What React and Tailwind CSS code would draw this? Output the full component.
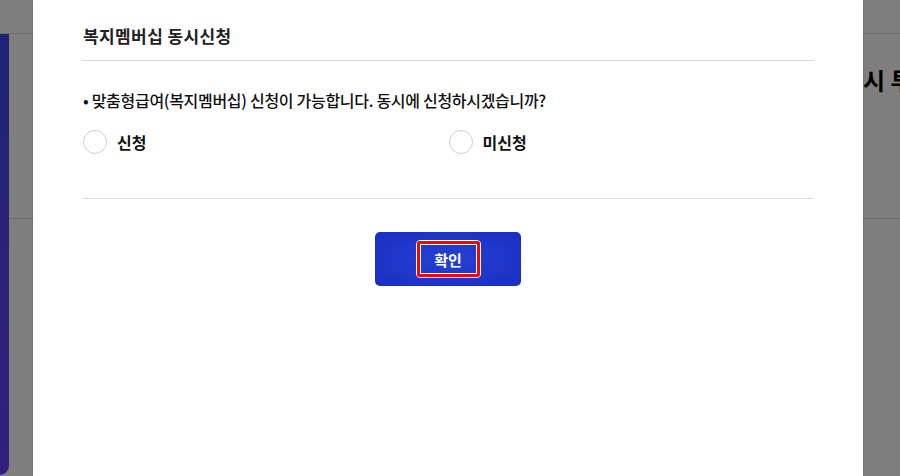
import React, { useState } from "react";

const font = { fontFamily: '"Noto Sans CJK KR", "Noto Sans", sans-serif' };

function Radio({ label, checked, onChange }) {
  return (
    <label className="flex items-center gap-[10px] cursor-pointer">
      <span
        className={`w-[24px] h-[24px] rounded-full border-[1.5px] ${checked ? "border-[#1c31c6]" : "border-[#cfcfcf]"} bg-white flex items-center justify-center`}
        onClick={onChange}
      >
        {checked && <span className="w-[12px] h-[12px] rounded-full bg-[#1c31c6]" />}
      </span>
      <span className="text-[16px] font-bold text-[#111] leading-none" onClick={onChange}>{label}</span>
    </label>
  );
}

export default function App() {
  const [choice, setChoice] = useState(null);

  return (
    <div className="relative w-[900px] h-[476px] overflow-hidden bg-white" style={font}>
      {/* page behind the dialog */}
      <div className="flex flex-col h-full">
        <div className="h-[34px] border-b border-[#dedede] shrink-0" />
        <div className="flex flex-1">
          <div className="w-[9px] h-[441px] rounded-br-[10px] bg-gradient-to-b from-[#3c48e8] to-[#6640f6] shrink-0" />
          <div className="flex-1 flex flex-col">
            <div className="h-[185px] border-b border-[#dedede] pt-[31px]">
              <p className="ml-[854px] text-[24px] font-bold text-black whitespace-nowrap leading-[30px]">시 투자</p>
            </div>
          </div>
        </div>
      </div>

      {/* overlay */}
      <div className="absolute inset-0 bg-black/50" />

      {/* dialog */}
      <div className="absolute left-[33px] top-0 w-[830px] h-[476px] bg-white shadow-[0_0_2px_rgba(0,0,0,0.25)] px-[49px] pt-[23px]">
        <h2 className="text-[17px] font-semibold text-[#222] leading-[26px] pl-px tracking-[0.4px]">복지멤버십 동시신청</h2>
        <div className="mt-[11px] border-t border-[#dddddd]" />

        <p className="mt-[28px] text-[16px] font-medium text-[#111] leading-[23px] pl-px tracking-[-0.3px]">
          • 맞춤형급여(복지멤버십) 신청이 가능합니다. 동시에 신청하시겠습니까?
        </p>

        <div className="mt-[18px] grid grid-cols-2 pl-px">
          <Radio label="신청" checked={choice === "y"} onChange={() => setChoice("y")} />
          <Radio label="미신청" checked={choice === "n"} onChange={() => setChoice("n")} />
        </div>

        <div className="mt-[44px] border-t border-[#dddddd]" />

        <div className="mt-[33px] flex justify-center">
          <button className="w-[146px] h-[54px] rounded-[5px] bg-[radial-gradient(ellipse_at_center,#2540d6,#1a2ec0)] flex items-center justify-center">
            <span className="w-[65px] h-[38px] rounded-[4px] border border-white flex">
              <span className="flex-1 rounded-[3px] border-[3px] border-[#ff0000] flex">
                <span className="flex-1 border border-white flex items-center justify-center text-[15px] font-bold text-white leading-none">
                  확인
                </span>
              </span>
            </span>
          </button>
        </div>
      </div>
    </div>
  );
}
